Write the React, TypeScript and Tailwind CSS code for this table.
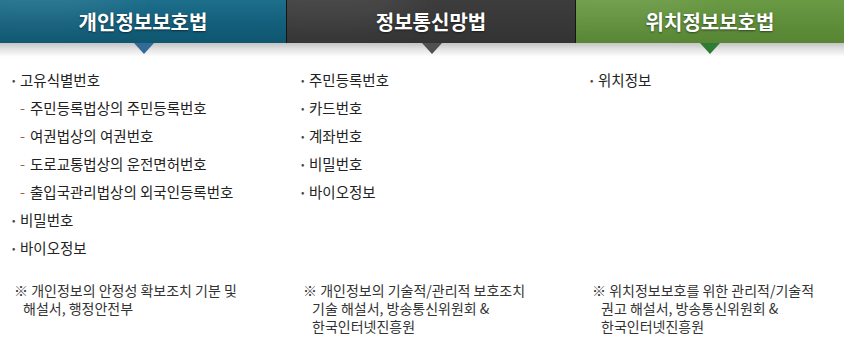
import { Fragment } from "react";

const tabs = [
  {
    title: "개인정보보호법",
    bg: "bg-[linear-gradient(180deg,#1d6f8c_0%,#14607c_50%,#0f5670_100%)]",
    arrow: "border-t-[#336a96]",
  },
  {
    title: "정보통신망법",
    bg: "bg-[linear-gradient(180deg,#3d3d3d_0%,#383838_50%,#333333_100%)]",
    arrow: "border-t-[#505050]",
  },
  {
    title: "위치정보보호법",
    bg: "bg-[linear-gradient(180deg,#6a9a44_0%,#5f8f3a_50%,#578534_100%)]",
    arrow: "border-t-[#2f7a35]",
  },
];

type Item = { text: string; sub?: boolean };

const columns: { items: Item[]; note: string[] }[] = [
  {
    items: [
      { text: "고유식별번호" },
      { text: "주민등록법상의 주민등록번호", sub: true },
      { text: "여권법상의 여권번호", sub: true },
      { text: "도로교통법상의 운전면허번호", sub: true },
      { text: "출입국관리법상의 외국인등록번호", sub: true },
      { text: "비밀번호" },
      { text: "바이오정보" },
    ],
    note: ["※ 개인정보의 안정성 확보조치 기분 및", "해설서, 행정안전부"],
  },
  {
    items: [
      { text: "주민등록번호" },
      { text: "카드번호" },
      { text: "계좌번호" },
      { text: "비밀번호" },
      { text: "바이오정보" },
    ],
    note: ["※ 개인정보의 기술적/관리적 보호조치", "기술 해설서, 방송통신위원회 &", "한국인터넷진흥원"],
  },
  {
    items: [{ text: "위치정보" }],
    note: ["※ 위치정보보호를 위한 관리적/기술적", "권고 해설서, 방송통신위원회 &", "한국인터넷진흥원"],
  },
];

const colPad = ["pl-[12px]", "pl-[14px]", "pl-[14px]"];

export default function App() {
  return (
    <div
      className="h-[360px] w-[844px] overflow-hidden bg-white text-[#222]"
      style={{ fontFamily: '"Noto Sans CJK KR", "Noto Sans", sans-serif' }}
    >
      <div className="relative">
        <div className="grid h-[43px] grid-cols-[286px_1px_288px_1px_1fr] bg-[#1a1a1a]">
          {tabs.map((tab, i) => (
            <Fragment key={tab.title}>
              {i > 0 && <div className="bg-[#151515]" />}
              <div className={`relative flex items-center justify-center overflow-hidden ${tab.bg}`}>
                <div className="absolute -top-6 left-[-40px] h-[40px] w-[160px] rounded-full bg-white/10 blur-xl" />
                <span className="relative text-[20px] font-bold leading-none text-white [text-shadow:0_1px_2px_rgba(0,0,0,0.5)]">
                  {tab.title}
                </span>
              </div>
            </Fragment>
          ))}
        </div>
        <div className="h-[14px] bg-[linear-gradient(180deg,#c4c4c4_0%,#e6e6e6_50%,#ffffff_100%)]" />
        <div className="pointer-events-none absolute left-0 top-[43px] grid w-full grid-cols-[287px_289px_1fr]">
          {tabs.map((tab) => (
            <div key={tab.title} className="flex justify-center">
              <div className={`h-0 w-0 border-x-[10px] border-t-[11px] border-x-transparent ${tab.arrow}`} />
            </div>
          ))}
        </div>
      </div>

      <div className="grid grid-cols-[287px_289px_1fr] pt-[9px]">
        {columns.map((col, ci) => (
          <div key={ci} className={`flex flex-col ${colPad[ci]}`}>
            <ul className="h-[215px] text-[14.5px] leading-[28px]">
              {col.items.map((item, ii) => (
                <li key={ii} className={`flex ${item.sub ? "pl-[8px]" : ""}`}>
                  {item.sub ? (
                    <span className="w-[10px] text-[#a65a42]">-</span>
                  ) : (
                    <span className="w-[8px] text-[10px] text-[#444]">•</span>
                  )}
                  <span>{item.text}</span>
                </li>
              ))}
            </ul>
            <div className="pl-[2px] text-[14px] leading-[18px] text-[#333]">
              {col.note.map((line, li) => (
                <div key={li} className={li > 0 ? "pl-[9px]" : ""}>
                  {line}
                </div>
              ))}
            </div>
          </div>
        ))}
      </div>
    </div>
  );
}
